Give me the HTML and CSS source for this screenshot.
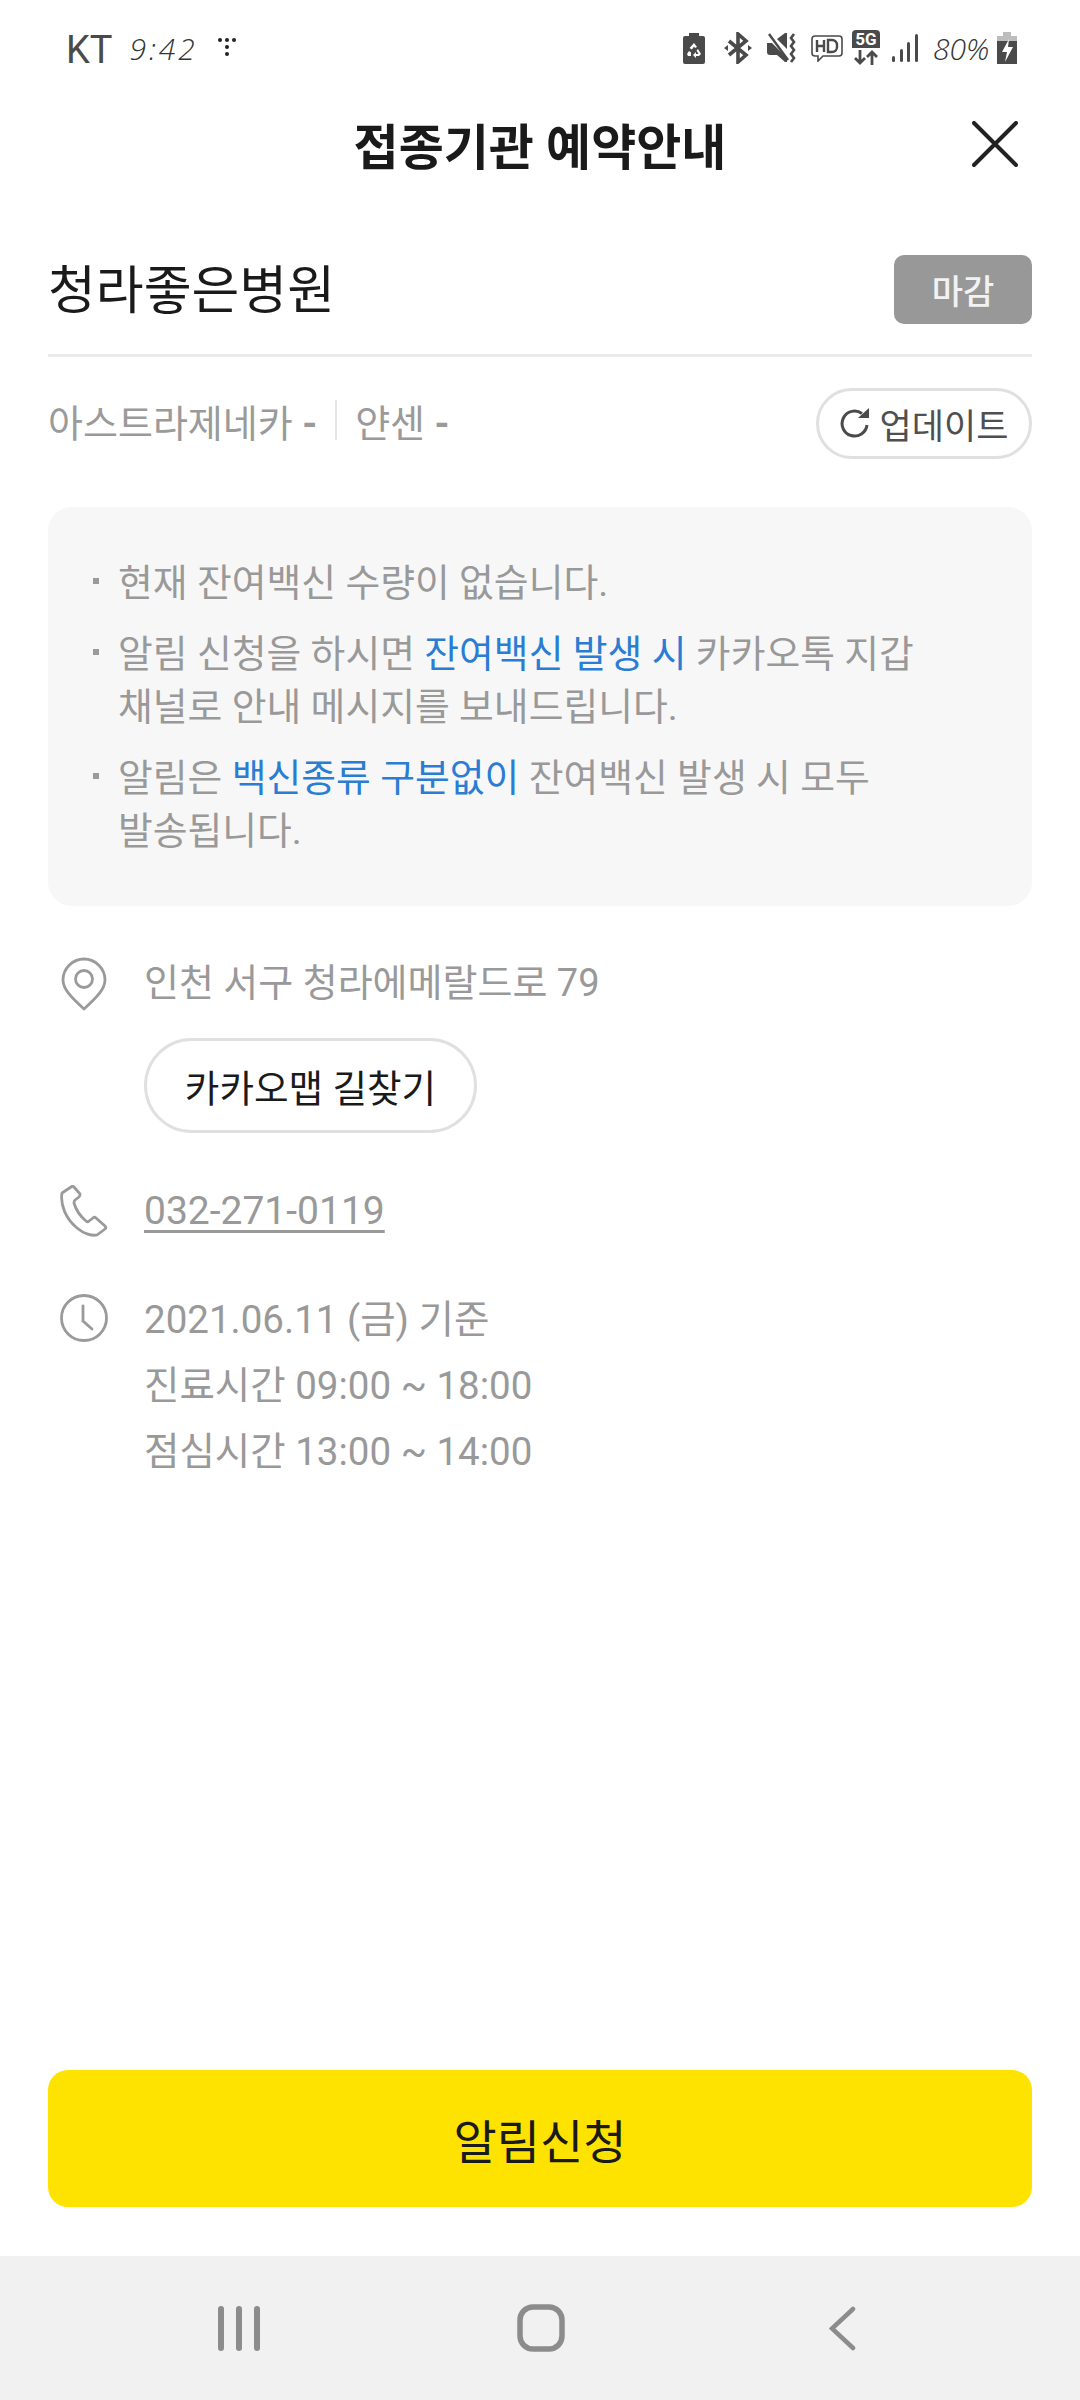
FILE: index.html
```html
<!DOCTYPE html>
<html lang="ko">
<head>
  <meta charset="UTF-8" />
  <meta name="viewport" content="width=device-width,initial-scale=1" />
  <title>접종기관 예약안내</title>
  <link rel="stylesheet" href="styles.css">
</head>
<body>
<div class="screen">
  <div class="status">
    <div class="status-left">
      <span class="carrier">KT</span>
      <span class="hand-time">9:42</span>
      <svg class="ic-dots" width="18" height="18" viewBox="0 0 18 18" fill="#222"><circle cx="2" cy="2" r="2"/><circle cx="9" cy="2" r="2"/><circle cx="16" cy="2" r="2"/><circle cx="9" cy="9" r="2"/><circle cx="9" cy="16" r="2"/></svg>
    </div>
    <div class="status-right">
      <svg width="22" height="31" viewBox="0 0 22 31"><path d="M6 0h10v3h4a2 2 0 0 1 2 2v24a2 2 0 0 1-2 2H2a2 2 0 0 1-2-2V5a2 2 0 0 1 2-2h4z" fill="#4a4a4a"/><path d="M11 10l3 4-2 1-1-1.500-2 3-2.500-1.500zM15 16l3 5-2 2h-3v2l-3-3 3-3v2h2.500l-2-3.500zM8 19.500v3.500h-3l-1-2 2-3z" fill="#fff"/></svg>
      <svg class="gap-a" width="28" height="32" viewBox="0 0 28 32" fill="none" stroke="#4a4a4a" stroke-width="3.600"><path d="M5 9l17 14-8 7V2l8 7L5 23"/><path d="M0 16l4-3v6zM28 16l-4-3v6z" fill="#4a4a4a" stroke="none"/></svg>
      <svg class="gap-b" width="31" height="30" viewBox="0 0 31 30"><path d="M0 10h5l15 15v4h-2l-8-7H3a3 3 0 0 1-3-3zM10 6l8-6h2v16z" fill="#4a4a4a"/><path d="M2 1l19 26" stroke="#4a4a4a" stroke-width="2.400"/><path d="M27 1l-3 4 3 4-3 4 3 4-3 4 3 4-3 4" fill="none" stroke="#4a4a4a" stroke-width="2.600"/></svg>
      <svg class="gap-c" width="32" height="27" viewBox="0 0 32 27" fill="none" stroke="#4a4a4a" stroke-width="1.600"><path d="M4 1h24a3 3 0 0 1 3 3v14a3 3 0 0 1-3 3H12l-5 5v-5H4a3 3 0 0 1-3-3V4a3 3 0 0 1 3-3z"/><path d="M6 5v12M13 5v12M6 11h7M17 5v12h4a5 5 0 0 0 5-5v-2a5 5 0 0 0-5-5z" stroke-width="2.400"/></svg>
      <span class="net-5g"><span class="net-5g-box">5G</span><svg width="24" height="15" viewBox="0 0 24 15" fill="none" stroke="#4a4a4a" stroke-width="2.800"><path d="M6 0v13M1 8l5 5 5-5M18 15V2M13 7l5-5 5 5"/></svg></span>
      <svg class="gap-d" width="26" height="28" viewBox="0 0 26 28" fill="#4a4a4a"><rect x="0" y="22" width="3" height="6" rx="1.500"/><rect x="8" y="15" width="3" height="13" rx="1.500"/><rect x="15" y="8" width="3" height="20" rx="1.500"/><rect x="23" y="0" width="3" height="28" rx="1.500"/></svg>
      <span class="hand-batt">80%</span>
      <svg width="20" height="32" viewBox="0 0 20 32"><path d="M6 0h8v4h6v5H0V4h6z" fill="#bdbdbd"/><path d="M0 9h20v23H0z" fill="#4a4a4a"/><path d="M12 7L5 20h5l-2 10 8-15h-5z" fill="#fff"/></svg>
    </div>
  </div>

  <header class="title-bar">
    <h1 class="title">접종기관 예약안내</h1>
    <svg class="close" width="46" height="46" viewBox="0 0 46 46" stroke="#222" stroke-width="4" stroke-linecap="round"><path d="M2 2l42 42M44 2L2 44"/></svg>
  </header>

  <main class="content">
    <div class="hospital">
      <h2 class="hospital-name">청라좋은병원</h2>
      <span class="closed-tag">마감</span>
    </div>

    <div class="stock">
      <div class="stock-list">
        <span>아스트라제네카 <b class="dash">-</b></span>
        <i class="sep"></i>
        <span>얀센 <b class="dash">-</b></span>
      </div>
      <button class="update-btn">
        <svg width="30" height="30" viewBox="0 0 30 30" fill="none" stroke="#4a4a4a" stroke-width="3"><path d="M27 17A12.500 12.500 0 1 1 22 5.500"/><path d="M18 10h11V0z" fill="#4a4a4a" stroke="none"/></svg>
        업데이트
      </button>
    </div>

    <section class="notice">
      <div class="notice-item"><span class="bullet"></span><p>현재 잔여백신 수량이 없습니다.</p></div>
      <div class="notice-item"><span class="bullet"></span><p>알림 신청을 하시면 <em>잔여백신 발생 시</em> 카카오톡 지갑<br>채널로 안내 메시지를 보내드립니다.</p></div>
      <div class="notice-item"><span class="bullet"></span><p>알림은 <em>백신종류 구분없이</em> 잔여백신 발생 시 모두<br>발송됩니다.</p></div>
    </section>

    <div class="info info-addr">
      <svg class="info-ic ic-pin" width="48" height="54" viewBox="0 0 48 54" fill="none" stroke="#9a9a9a" stroke-width="2.800"><path d="M24 52C11 40 3 32 3 23a21 21 0 0 1 42 0c0 9-8 17-21 29z" stroke-linejoin="round"/><circle cx="24" cy="22" r="8.500"/></svg>
      <div>
        <p class="info-text">인천 서구 청라에메랄드로 79</p>
        <button class="map-btn">카카오맵 길찾기</button>
      </div>
    </div>

    <div class="info info-tel">
      <svg class="info-ic ic-tel" width="48" height="52" viewBox="0 0 48 52" fill="none" stroke="#9a9a9a" stroke-width="2.800" stroke-linejoin="round"><path d="M11 2L2 8c-2 12 4 26 15 35 7 6 15 8 20 7l8-6c1-1 1-2 0-3l-9-8c-1-1-2-1-3 0l-4 3c-1 1-2 1-3 0-6-5-10-11-12-18 0-1 0-2 1-3l4-3c1-1 1-2 1-3L14 2c-1-1-2-1-3 0z"/></svg>
      <a class="info-text tel">032-271-0119</a>
    </div>

    <div class="info info-time">
      <svg class="info-ic ic-clock" width="48" height="48" viewBox="0 0 48 48" fill="none" stroke="#9a9a9a" stroke-width="2.800" stroke-linecap="round"><circle cx="24" cy="24" r="22.500"/><path d="M23 12v15l9 8"/></svg>
      <div class="hours">
        <p class="info-text">2021.06.11 (금) 기준</p>
        <p class="info-text">진료시간 09:00 ~ 18:00</p>
        <p class="info-text">점심시간 13:00 ~ 14:00</p>
      </div>
    </div>
  </main>

  <div class="bottom">
    <button class="apply-btn">알림신청</button>
  </div>

  <nav class="navbar">
    <svg width="42" height="45" viewBox="0 0 42 45" fill="#8c8c8c"><rect x="0" y="0" width="6" height="45" rx="3"/><rect x="18" y="0" width="6" height="45" rx="3"/><rect x="36" y="0" width="6" height="45" rx="3"/></svg>
    <svg width="48" height="48" viewBox="0 0 48 48" fill="none" stroke="#8c8c8c" stroke-width="5.500"><rect x="3" y="3" width="42" height="42" rx="13"/></svg>
    <svg width="27" height="45" viewBox="0 0 27 45" fill="none" stroke="#8c8c8c" stroke-width="4.500" stroke-linecap="round"><path d="M24 3L3 22.500 24 42"/></svg>
  </nav>
</div>
</body>
</html>
```

FILE: styles.css
```css
*{box-sizing:border-box}
html,body{margin:0;padding:0;background:#fff}
body{font-family:Roboto,"Noto Sans CJK KR",sans-serif;color:#1a1a1a}
p,h1,h2{margin:0;font-weight:400}
button{font-family:inherit;background:#fff;cursor:pointer;padding:0}

.screen{width:1080px;height:2400px;display:flex;flex-direction:column;overflow:hidden}

/* status bar */
.status{height:90px;padding:23px 63px 0 66px;display:flex;justify-content:space-between;align-items:flex-start}
.status-left{display:flex;align-items:center;height:50px}
.carrier{font-size:38px;color:#4a4a4a;margin-top:4px}
.hand-time,.hand-batt{font-family:"Open Sans",sans-serif;font-style:italic;font-weight:300;color:#333}
.hand-time{font-size:30px;letter-spacing:3px;margin-left:17px;width:78px}
.ic-dots{margin-left:10px;margin-top:-2px}
.status-right{display:flex;align-items:center;height:50px}
.gap-a{margin-left:19px}
.gap-b{margin-left:15px}
.gap-c{margin-left:13px}
.net-5g{margin-left:9px;display:flex;flex-direction:column;align-items:center;gap:2px;margin-top:-2px}
.net-5g-box{background:#4a4a4a;color:#fff;font-size:17px;font-weight:700;line-height:18px;width:28px;text-align:center;border-radius:4px 4px 0 0}
.gap-d{margin-left:12px}
.hand-batt{width:57px;margin:0 7px 0 15px;font-size:30px;white-space:nowrap}

/* title */
.title-bar{height:106px;display:flex;align-items:center;justify-content:center;position:relative}
.title{font-size:49px;font-weight:700;color:#1a1a1a}
.close{position:absolute;right:62px;top:31px}

.content{flex:1;padding:0 48px}

.hospital{height:161px;padding-top:59px;display:flex;justify-content:space-between;align-items:flex-start;border-bottom:3px solid #ebebeb}
.hospital-name{font-size:52px;line-height:74px;color:#1a1a1a}
.closed-tag{width:138px;height:69px;background:#989898;border-radius:10px;color:#f2f2f2;font-size:34px;font-weight:500;display:flex;align-items:center;justify-content:center}

.stock{display:flex;justify-content:space-between;align-items:center;height:72px;margin-top:30px}
.stock-list{display:flex;align-items:center;color:#9a9a9a;font-size:38px;margin-top:-6px}
.dash{font-weight:700}
.sep{width:2px;height:40px;background:#e4e4e4;margin:0 18px}
.update-btn{width:216px;height:71px;border:3px solid #e0e0e0;border-radius:36px;font-size:35px;color:#4f4f4f;display:flex;align-items:center;justify-content:center;gap:10px}

.notice{margin-top:48px;height:399px;background:#f7f7f7;border-radius:24px;padding:50px 44px 0;display:flex;flex-direction:column;gap:18px;color:#999;font-size:37.800px;line-height:53px}
.notice-item{display:flex}
.bullet{width:6px;height:6px;background:#9a9a9a;margin:21px 19px 0 1px;flex:none}
.notice em{font-style:normal;color:#2a7dd2}

.info{display:flex;gap:36px;padding-left:12px}
.info-ic{flex:none}
.ic-pin,.ic-tel,.ic-clock{margin-top:7px}
.info-text{font-size:38px;line-height:66px;color:#999}
.info-addr{margin-top:44px}
.map-btn{display:block;width:333px;height:95px;margin-top:22px;border:3px solid #e0e0e0;border-radius:48px;font-size:37.600px;color:#1a1a1a}
.info-tel{margin-top:45px}
.tel{font-size:39px;text-decoration:underline;text-underline-offset:6px}
.info-time{margin-top:43px}
.hours .info-text{font-size:38.500px}

.bottom{padding:0 48px 49px}
.apply-btn{width:100%;height:137px;background:#ffe300;border:none;border-radius:20px;font-size:47px;color:#1a1a1a}

.navbar{height:144px;background:#f1f1f1;padding-left:218px;display:flex;align-items:center}
.navbar svg:nth-child(1){margin-right:257px}
.navbar svg:nth-child(2){margin-right:264px}
```
